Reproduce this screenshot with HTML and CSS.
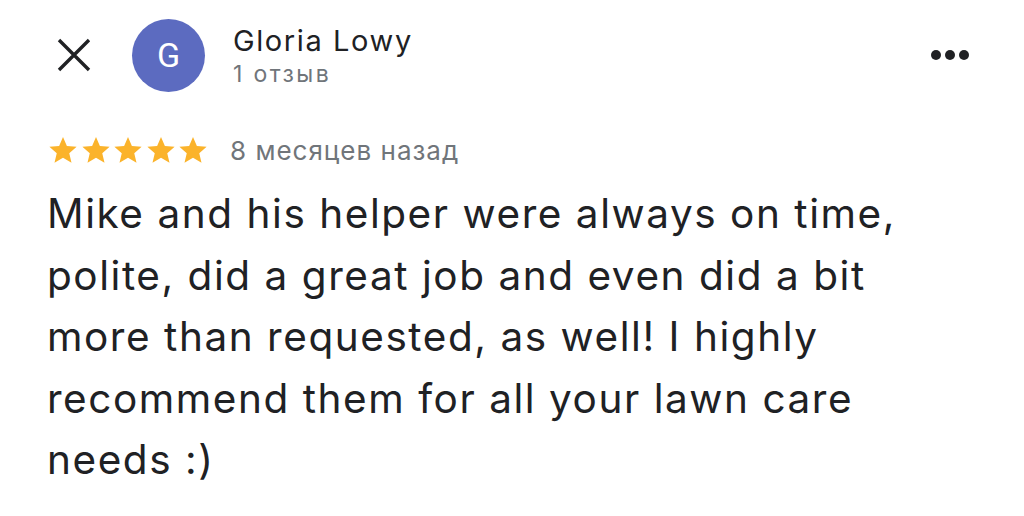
FILE: index.html
```html
<!DOCTYPE html>
<html lang="ru">
<head>
<meta charset="utf-8">
<link rel="stylesheet" href="styles.css">
</head>
<body>
<div class="review">
  <header class="head">
    <button class="close" aria-label="close">
      <svg width="34" height="34" viewBox="0 0 34 34"><path d="M2 2 L32 32 M32 2 L2 32" stroke="#202124" stroke-width="3.4" fill="none"/></svg>
    </button>
    <div class="avatar">G</div>
    <div class="who">
      <div class="name">Gloria Lowy</div>
      <div class="count">1 отзыв</div>
    </div>
    <div class="more"><span></span><span></span><span></span></div>
  </header>
  <div class="meta">
    <div class="stars">
      <svg viewBox="0 0 24 24"><path d="M12 1.5l3.1 7.2 7.8.7-5.9 5.1 1.8 7.7L12 18.1l-6.8 4.1 1.8-7.7-5.9-5.1 7.8-.7z"/></svg>
      <svg viewBox="0 0 24 24"><path d="M12 1.5l3.1 7.2 7.8.7-5.9 5.1 1.8 7.7L12 18.1l-6.8 4.1 1.8-7.7-5.9-5.1 7.8-.7z"/></svg>
      <svg viewBox="0 0 24 24"><path d="M12 1.5l3.1 7.2 7.8.7-5.9 5.1 1.8 7.7L12 18.1l-6.8 4.1 1.8-7.7-5.9-5.1 7.8-.7z"/></svg>
      <svg viewBox="0 0 24 24"><path d="M12 1.5l3.1 7.2 7.8.7-5.9 5.1 1.8 7.7L12 18.1l-6.8 4.1 1.8-7.7-5.9-5.1 7.8-.7z"/></svg>
      <svg viewBox="0 0 24 24"><path d="M12 1.5l3.1 7.2 7.8.7-5.9 5.1 1.8 7.7L12 18.1l-6.8 4.1 1.8-7.7-5.9-5.1 7.8-.7z"/></svg>
    </div>
    <span class="when">8 месяцев назад</span>
  </div>
  <p class="text">Mike and his helper were always on time, polite, did a great job and even did a bit more than requested, as well! I highly recommend them for all your lawn care needs :)</p>
</div>
</body>
</html>
```

FILE: styles.css
```css
* { box-sizing: border-box; }
html, body { margin: 0; background: #fff; }
body { font-family: Inter, "Noto Sans", sans-serif; color: #202124; }
.review { padding: 18px 0 0 47px; width: 1024px; height: 516px; overflow: hidden; }
.head { display: flex; align-items: center; height: 74px; padding-right: 55px; }
.close { background: none; border: 0; padding: 0; width: 75px; height: 34px; display: flex; align-items: center; margin-left: 10px; }
.avatar { width: 73px; height: 73px; border-radius: 50%; background: #5c6bc0; color: #fff; font-family: Roboto, sans-serif; font-size: 34px; display: flex; align-items: center; justify-content: center; }
.who { margin-left: 28px; flex: 1; margin-top: 4px; }
.name { font-size: 29px; line-height: 34px; color: #202124; letter-spacing: 1.6px; }
.count { font-size: 23px; line-height: 32px; color: #70757a; letter-spacing: 2.4px; }
.more { display: flex; gap: 3.5px; }
.more span { width: 10.5px; height: 10.5px; border-radius: 50%; background: #202124; }
.meta { display: flex; align-items: center; margin-top: 43px; height: 30px; }
.stars { display: flex; gap: 2.5px; margin-left: 1px; }
.stars svg { width: 30px; height: 30px; fill: #fbb32b; }
.when { margin-left: 22px; font-size: 26px; color: #70757a; letter-spacing: 1px; }
.text { margin: 18px 0 0; font-size: 40.5px; line-height: 61.5px; width: 920px; color: #202124; letter-spacing: 1.55px; }
```
